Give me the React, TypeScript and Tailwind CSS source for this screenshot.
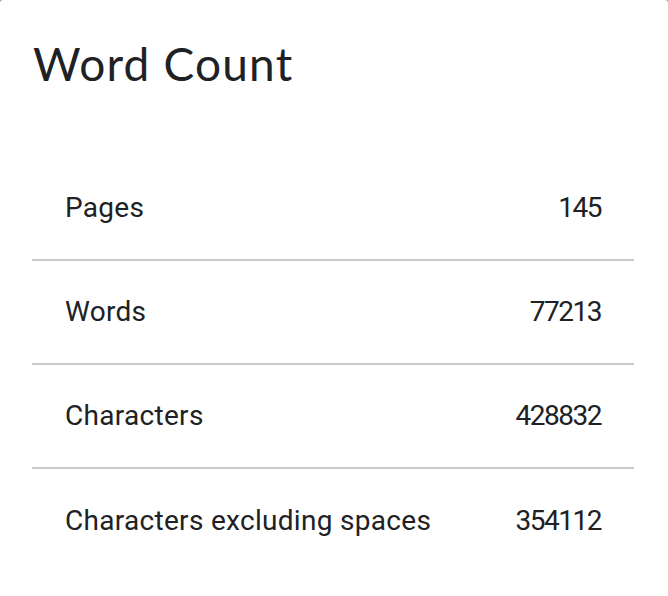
export default function App() {
  const rows = [
    { label: "Pages", value: "145" },
    { label: "Words", value: "77213" },
    { label: "Characters", value: "428832" },
    { label: "Characters excluding spaces", value: "354112" },
  ];
  return (
    <div className="w-[668px] h-[596px] bg-[#9e9e9e]">
      <div className="w-full h-full bg-white rounded-t-[3px] pt-[36px]">
        <h1
          className="ml-[33px] text-[46px] leading-[56px] tracking-[1.2px] text-[#202124]"
          style={{ fontFamily: "Lato, 'Noto Sans', sans-serif" }}
        >
          Word Count
        </h1>
        <div className="mt-[65px] ml-[32px] mr-[34px]">
          {rows.map((r, i) => (
            <div
              key={r.label}
              className={
                "flex items-center justify-between h-[104px] px-[33px] text-[28px] text-[#202124] " +
                (i < rows.length - 1 ? "border-b-2 border-[#c8c8c8]" : "")
              }
              style={{ fontFamily: "Roboto, sans-serif" }}
            >
              <span className="tracking-[0.3px]">{r.label}</span>
              <span className="tracking-[-1.5px]">{r.value}</span>
            </div>
          ))}
        </div>
      </div>
    </div>
  );
}
